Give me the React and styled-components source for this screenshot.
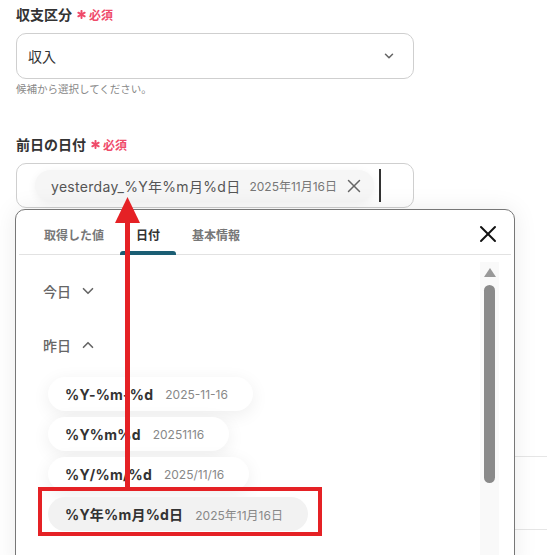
import styled, { createGlobalStyle } from "styled-components";
import { ChevronDown, ChevronUp, X } from "lucide-react";

const GlobalStyle = createGlobalStyle`
  body {
    margin: 0;
    background: #fff;
    font-family: Inter, "Noto Sans CJK JP", sans-serif;
    color: #333;
  }
`;

const FORMATS = [
  { format: "%Y-%m-%d", sample: "2025-11-16" },
  { format: "%Y%m%d", sample: "20251116" },
  { format: "%Y/%m/%d", sample: "2025/11/16" },
  { format: "%Y年%m月%d日", sample: "2025年11月16日", active: true },
];

const Page = styled.div`
  position: relative;
  width: 547px;
  height: 555px;
  overflow: hidden;
  padding: 4px 0 0 16px;
  box-sizing: border-box;
`;

const Field = styled.div`
  width: 398px;
  margin-bottom: ${(p) => p.$gap || 0}px;
`;

const Label = styled.div`
  display: flex;
  align-items: center;
  height: 20px;
  font-size: 14px;
  font-weight: 600;
  color: #333;
  margin-bottom: 9px;
`;

const Required = styled.span`
  display: inline-flex;
  align-items: center;
  gap: 3px;
  margin-left: 5px;
  font-size: 12px;
  font-weight: 700;
  color: #ef4b6a;
`;

const Select = styled.div`
  display: flex;
  align-items: center;
  justify-content: space-between;
  height: 46px;
  box-sizing: border-box;
  border: 1px solid #cfcfcf;
  border-radius: 10px;
  padding: 0 17px 0 11px;
  font-size: 14px;
  color: #333;
`;

const Help = styled.div`
  margin-top: 3px;
  font-size: 10.5px;
  line-height: 16px;
  color: #888;
`;

const InputWrap = styled.div`
  position: relative;
`;

const Input = styled.div`
  display: flex;
  align-items: center;
  height: 45px;
  box-sizing: border-box;
  border: 1px solid #cfcfcf;
  border-radius: 10px;
  padding-left: 18px;
`;

const Tag = styled.div`
  display: flex;
  align-items: center;
  height: 31px;
  padding: 0 9px 0 16px;
  border-radius: 16px;
  background: #f6f6f6;
  box-shadow: 0 2px 8px rgba(0, 0, 0, 0.06);
  color: #555;
  font-size: 14px;
  letter-spacing: 0.3px;
`;

const TagSample = styled.span`
  margin: 0 6px 0 9px;
  font-size: 12px;
  letter-spacing: 0;
  color: #777;
`;

const Caret = styled.div`
  width: 2px;
  height: 33px;
  margin-left: 5px;
  background: #333;
`;

const Popup = styled.div`
  position: absolute;
  left: -1px;
  top: calc(100% + 1px);
  width: 500px;
  height: 360px;
  box-sizing: border-box;
  border: 1px solid #777;
  border-radius: 10px 10px 0 0;
  background: #fff;
  box-shadow: 0 0 24px rgba(0, 0, 0, 0.08);
  z-index: 2;
`;

const TabBar = styled.div`
  display: flex;
  align-items: stretch;
  height: 45px;
  box-sizing: border-box;
  margin: 0 3px;
  padding: 0 9px 0 9px;
  border-bottom: 1px solid #e2e2e2;
`;

const Tab = styled.div`
  position: relative;
  display: flex;
  align-items: center;
  padding: 4px 16px 0;
  font-size: 12px;
  font-weight: 600;
  color: ${(p) => (p.$active ? "#333" : "#777")};

  &::after {
    content: "";
    display: ${(p) => (p.$active ? "block" : "none")};
    position: absolute;
    left: 0;
    right: 0;
    bottom: -1px;
    height: 4px;
    border-radius: 3px 3px 0 0;
    background: #1b5e74;
  }
`;

const Close = styled.div`
  margin-left: auto;
  align-self: center;
  display: flex;
  padding-top: 4px;
  color: #111;
`;

const Body = styled.div`
  display: flex;
  padding-top: 7px;
`;

const Content = styled.div`
  flex: 1;
  padding-top: 19px;
`;

const SectionHead = styled.div`
  display: flex;
  align-items: center;
  gap: 8px;
  height: 20px;
  padding-left: 27px;
  font-size: 14px;
  font-weight: 500;
  color: #666;
  margin-bottom: ${(p) => p.$gap}px;
`;

const ChipList = styled.div`
  display: flex;
  flex-direction: column;
  align-items: flex-start;
  gap: 6px;
  padding-left: 32px;
`;

const Chip = styled.div`
  display: flex;
  align-items: center;
  gap: 12px;
  height: 34px;
  padding: 0 25px 0 17px;
  border-radius: 17px;
  background: ${(p) => (p.$active ? "#f2f2f2" : "#fff")};
  box-shadow: ${(p) => (p.$active ? "none" : "0 4px 18px rgba(0, 0, 0, 0.07)")};
`;

const Format = styled.span`
  font-size: 14px;
  font-weight: 700;
  letter-spacing: 0.2px;
  color: #333;
`;

const Sample = styled.span`
  font-size: 12px;
  color: #888;
`;

const Track = styled.div`
  display: flex;
  flex-direction: column;
  align-items: center;
  width: 19px;
  height: 300px;
  margin-right: 15px;
  padding-top: 6px;
  background: #f9f9f9;
`;

const UpArrow = styled.div`
  width: 0;
  height: 0;
  border-left: 6.5px solid transparent;
  border-right: 6.5px solid transparent;
  border-bottom: 9px solid #999;
`;

const Thumb = styled.div`
  width: 11px;
  height: 198px;
  margin-top: 8px;
  border-radius: 6px;
  background: #8a8a8a;
`;

const BehindList = styled.div`
  margin-top: 248px;
`;

const BehindRow = styled.div`
  height: 72px;
  border-top: 1px solid #e6e6e6;
`;

const Highlight = styled.div`
  position: absolute;
  left: 38px;
  top: 487px;
  width: 284px;
  height: 49px;
  box-sizing: border-box;
  border: 4px solid #e52125;
  z-index: 3;
`;

const ArrowSvg = styled.svg`
  position: absolute;
  left: 0;
  top: 0;
  z-index: 3;
`;

const Asterisk = () => (
  <svg width="9" height="9" viewBox="0 0 10 10">
    <g stroke="#ef4b6a" strokeWidth="2.2" strokeLinecap="round">
      <line x1="5" y1="1" x2="5" y2="9" />
      <line x1="1.5" y1="3" x2="8.5" y2="7" />
      <line x1="1.5" y1="7" x2="8.5" y2="3" />
    </g>
  </svg>
);

const RequiredMark = () => (
  <Required>
    <Asterisk />
    必須
  </Required>
);

const App = () => {
  return (
    <>
      <GlobalStyle />
      <Page>
        <Field $gap={36}>
          <Label>
            収支区分
            <RequiredMark />
          </Label>
          <Select>
            収入
            <ChevronDown size={14} strokeWidth={2.6} color="#666" />
          </Select>
          <Help>候補から選択してください。</Help>
        </Field>

        <Field>
          <Label>
            前日の日付
            <RequiredMark />
          </Label>
          <InputWrap>
            <Input>
              <Tag>
                yesterday_%Y年%m月%d日
                <TagSample>2025年11月16日</TagSample>
                <X size={22} strokeWidth={1.6} color="#666" />
              </Tag>
              <Caret />
            </Input>
            <Popup>
              <TabBar>
                <Tab>取得した値</Tab>
                <Tab $active>日付</Tab>
                <Tab>基本情報</Tab>
                <Close>
                  <X size={28} strokeWidth={1.7} />
                </Close>
              </TabBar>
              <Body>
                <Content>
                  <SectionHead $gap={34}>
                    今日
                    <ChevronDown size={18} strokeWidth={2.2} color="#666" />
                  </SectionHead>
                  <SectionHead $gap={22}>
                    昨日
                    <ChevronUp size={18} strokeWidth={2.2} color="#666" />
                  </SectionHead>
                  <ChipList>
                    {FORMATS.map((f) => (
                      <Chip key={f.format} $active={f.active}>
                        <Format>{f.format}</Format>
                        <Sample>{f.sample}</Sample>
                      </Chip>
                    ))}
                  </ChipList>
                </Content>
                <Track>
                  <UpArrow />
                  <Thumb />
                </Track>
              </Body>
            </Popup>
          </InputWrap>
        </Field>

        <BehindList>
          <BehindRow />
          <BehindRow />
        </BehindList>

        <Highlight />
        <ArrowSvg width="547" height="555">
          <polygon points="127.5,197 115,223 140,223" fill="#e52125" />
          <rect x="125" y="221" width="5" height="266" fill="#e52125" />
        </ArrowSvg>
      </Page>
    </>
  );
};

export default App;
